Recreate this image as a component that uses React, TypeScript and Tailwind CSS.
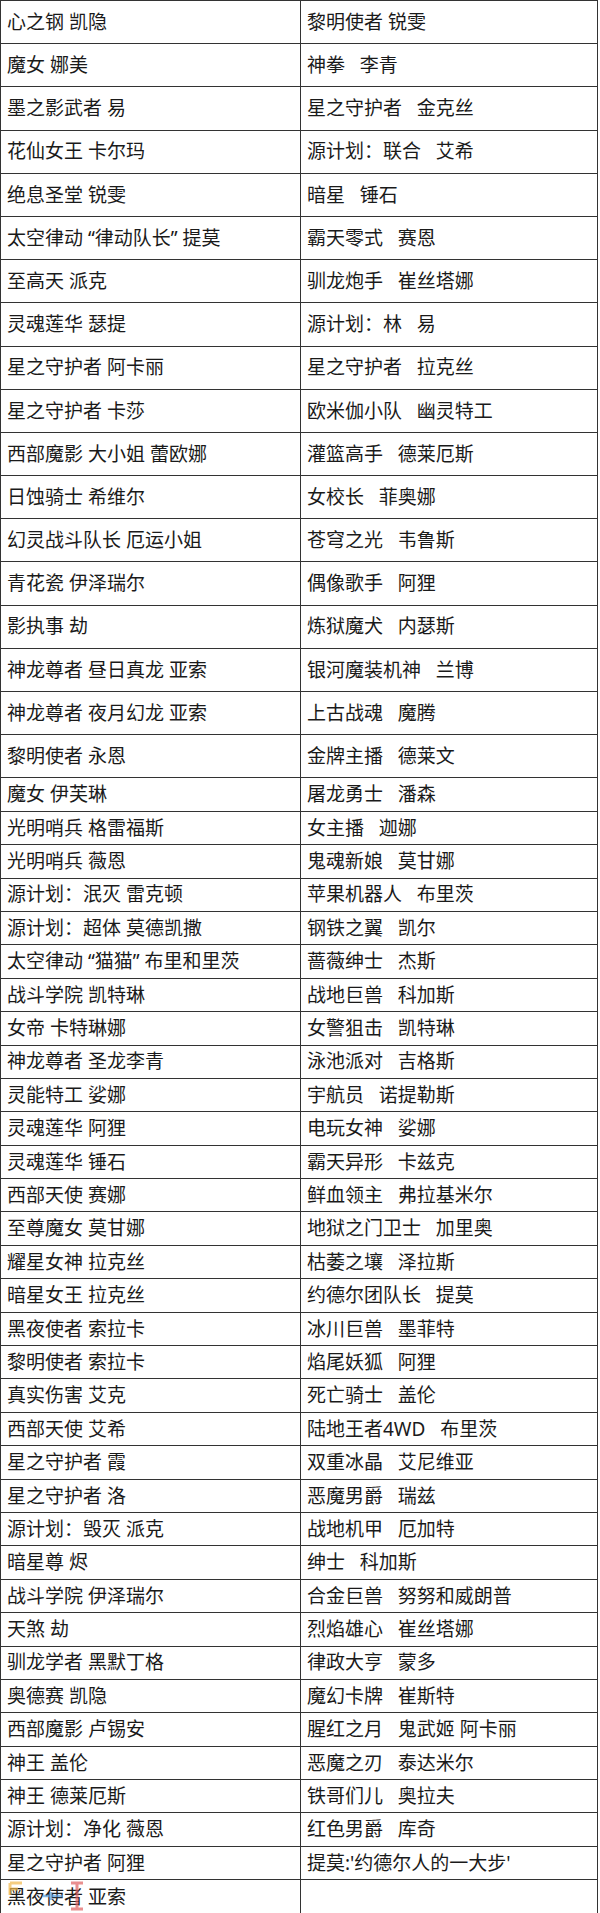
const left = [
  "心之钢 凯隐",
  "魔女 娜美",
  "墨之影武者 易",
  "花仙女王 卡尔玛",
  "绝息圣堂 锐雯",
  "太空律动 “律动队长” 提莫",
  "至高天 派克",
  "灵魂莲华 瑟提",
  "星之守护者 阿卡丽",
  "星之守护者 卡莎",
  "西部魔影 大小姐 蕾欧娜",
  "日蚀骑士 希维尔",
  "幻灵战斗队长 厄运小姐",
  "青花瓷 伊泽瑞尔",
  "影执事 劫",
  "神龙尊者 昼日真龙 亚索",
  "神龙尊者 夜月幻龙 亚索",
  "黎明使者 永恩",
  "魔女 伊芙琳",
  "光明哨兵 格雷福斯",
  "光明哨兵 薇恩",
  "源计划：泯灭 雷克顿",
  "源计划：超体 莫德凯撒",
  "太空律动 “猫猫” 布里和里茨",
  "战斗学院 凯特琳",
  "女帝 卡特琳娜",
  "神龙尊者 圣龙李青",
  "灵能特工 娑娜",
  "灵魂莲华 阿狸",
  "灵魂莲华 锤石",
  "西部天使 赛娜",
  "至尊魔女 莫甘娜",
  "耀星女神 拉克丝",
  "暗星女王 拉克丝",
  "黑夜使者 索拉卡",
  "黎明使者 索拉卡",
  "真实伤害 艾克",
  "西部天使 艾希",
  "星之守护者 霞",
  "星之守护者 洛",
  "源计划：毁灭 派克",
  "暗星尊 烬",
  "战斗学院 伊泽瑞尔",
  "天煞 劫",
  "驯龙学者 黑默丁格",
  "奥德赛 凯隐",
  "西部魔影 卢锡安",
  "神王 盖伦",
  "神王 德莱厄斯",
  "源计划：净化 薇恩",
  "星之守护者 阿狸",
  "黑夜使者 亚索",
];

const right = [
  "黎明使者 锐雯",
  "神拳   李青",
  "星之守护者   金克丝",
  "源计划：联合   艾希",
  "暗星   锤石",
  "霸天零式   赛恩",
  "驯龙炮手   崔丝塔娜",
  "源计划：林   易",
  "星之守护者   拉克丝",
  "欧米伽小队   幽灵特工",
  "灌篮高手   德莱厄斯",
  "女校长   菲奥娜",
  "苍穹之光   韦鲁斯",
  "偶像歌手   阿狸",
  "炼狱魔犬   内瑟斯",
  "银河魔装机神   兰博",
  "上古战魂   魔腾",
  "金牌主播   德莱文",
  "屠龙勇士   潘森",
  "女主播   迦娜",
  "鬼魂新娘   莫甘娜",
  "苹果机器人   布里茨",
  "钢铁之翼   凯尔",
  "蔷薇绅士   杰斯",
  "战地巨兽   科加斯",
  "女警狙击   凯特琳",
  "泳池派对   吉格斯",
  "宇航员   诺提勒斯",
  "电玩女神   娑娜",
  "霸天异形   卡兹克",
  "鲜血领主   弗拉基米尔",
  "地狱之门卫士   加里奥",
  "枯萎之壤   泽拉斯",
  "约德尔团队长   提莫",
  "冰川巨兽   墨菲特",
  "焰尾妖狐   阿狸",
  "死亡骑士   盖伦",
  "陆地王者4WD   布里茨",
  "双重冰晶   艾尼维亚",
  "恶魔男爵   瑞兹",
  "战地机甲   厄加特",
  "绅士   科加斯",
  "合金巨兽   努努和威朗普",
  "烈焰雄心   崔丝塔娜",
  "律政大亨   蒙多",
  "魔幻卡牌   崔斯特",
  "腥红之月   鬼武姬 阿卡丽",
  "恶魔之刃   泰达米尔",
  "铁哥们儿   奥拉夫",
  "红色男爵   库奇",
  "提莫:'约德尔人的一大步'",
  "",
];

// partial site watermark sitting over the last row
function Watermark() {
  return (
    <svg className="pointer-events-none absolute left-[6px] top-[1px] opacity-70" width="90" height="30" viewBox="0 0 90 30">
      <path d="M3 2h12M3 2v12M3 8h8" stroke="#f2b84b" strokeWidth="3" fill="none" />
      <path d="M36 15h20M44 11v8" stroke="#5aa0e0" strokeWidth="2.5" fill="none" />
      <path d="M64 2h12M70 2v26M64 28h12" stroke="#e06060" strokeWidth="3" fill="none" />
    </svg>
  );
}

export default function App() {
  return (
    <div className="w-[600px] bg-white font-['Noto_Sans','Noto_Sans_CJK_SC',sans-serif] text-[19px] text-[#1a1a1a]">
      <div className="w-[598px] border-l border-r border-t border-[#333]">
        {left.map((name, i) => {
          const tall = i < 18;
          const last = i === left.length - 1;
          return (
            <div
              key={i}
              className={`relative flex ${tall ? "h-[43.2px]" : "h-[33.4px]"} ${last ? "" : "border-b border-[#333]"}`}
            >
              <div className="flex w-[300px] items-center border-r border-[#333] pl-[6px] whitespace-pre">
                {name}
              </div>
              <div className="flex flex-1 items-center pl-[6px] whitespace-pre">{right[i]}</div>
              {last && <Watermark />}
            </div>
          );
        })}
      </div>
    </div>
  );
}
